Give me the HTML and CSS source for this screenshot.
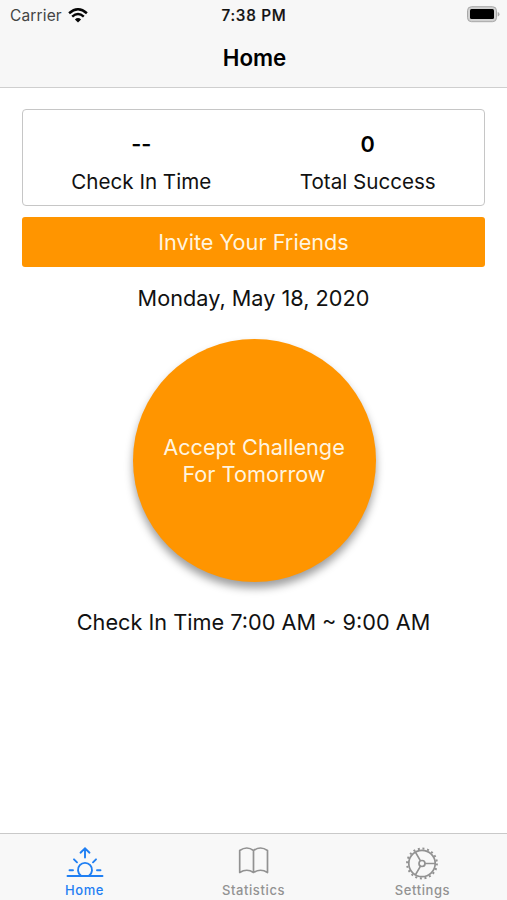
FILE: index.html
```html
<!DOCTYPE html>
<html lang="en">
<head>
<meta charset="utf-8">
<title>Home</title>
<link rel="stylesheet" href="styles.css">
</head>
<body>
<header class="header">
  <div class="status">
    <div class="carrier"><span>Carrier</span>
      <svg class="wifi" width="20" height="15" viewBox="0 0 20 15" fill="none" stroke="#050505" stroke-width="2.5"><path d="M1.1 5.2Q10-2.6 18.9 5.2M4.2 8.6Q10 3.5 15.8 8.6"/><path d="M6.9 11.5Q10 8.7 13.1 11.5L10 14.5Z" fill="#050505" stroke="none"/></svg>
    </div>
    <span class="clock">7:38 PM</span>
    <svg class="battery" width="34" height="17" viewBox="0 0 34 17"><rect x="1.500" y=".7" width="29" height="15" rx="4" fill="#d0d0d0" stroke="#a8a8a8"/><rect x="4" y="3" width="24" height="10" rx="1.500" fill="#000"/><path d="M31.700 6q1.800.6 1.800 2.300t-1.800 2.300z" fill="#aaa"/></svg>
  </div>
  <h1 class="title">Home</h1>
</header>
<main class="content">
  <section class="stats">
    <div class="stat"><strong class="value">--</strong><span class="label">Check In Time</span></div>
    <div class="stat"><strong class="value">0</strong><span class="label">Total Success</span></div>
  </section>
  <button class="invite">Invite Your Friends</button>
  <p class="date">Monday, May 18, 2020</p>
  <button class="challenge"><span>Accept Challenge</span><span>For Tomorrow</span></button>
  <p class="window">Check In Time 7:00 AM ~ 9:00 AM</p>
</main>
<nav class="tabs">
  <a class="tab active">
    <svg width="38" height="34" viewBox="0 0 38 34" fill="none" stroke="currentColor" stroke-width="1.9" stroke-linecap="round"><path d="M19 11.500V2.500M14.500 6.700L19 2.300l4.500 4.400M1.500 30h35M14.800 29.500a7 7 0 1 1 8.400 0M3.500 24.200h3.500M31 24.200h3.500M8 13.300l3 3M30 13.300l-3 3"/></svg>
    <span>Home</span>
  </a>
  <a class="tab">
    <svg width="38" height="34" viewBox="0 0 38 34" fill="none" stroke="currentColor" stroke-width="1.7" stroke-linejoin="round"><path d="M18.500 4.500Q12-.5 4.700 4.500V26.500Q12 22 18.500 26.500Q25.500 22 32.500 26.500V4.500Q25.500-.5 18.500 4.500V26.500"/></svg>
    <span>Statistics</span>
  </a>
  <a class="tab">
    <svg width="38" height="34" viewBox="0 0 38 34" fill="none" stroke="currentColor" stroke-width="1.700"><circle cx="18" cy="17.500" r="13.200"/><circle cx="18" cy="17.500" r="14.900" stroke-width="2" stroke-dasharray="2 2.681"/><circle cx="18" cy="17.500" r="3"/><path d="M21 17.500h10M16.500 14.900l-5.100-8.800M16.500 20.100l-5.100 8.800"/></svg>
    <span>Settings</span>
  </a>
</nav>
</body>
</html>
```
FILE: styles.css
```css
* { box-sizing: border-box; }
body {
  margin: 0;
  height: 900px;
  display: flex;
  flex-direction: column;
  background: #fff;
  color: #111;
  font-family: Inter, "Liberation Sans", sans-serif;
  font-size: 21.7px;
  overflow: hidden;
}
button { border: 0; padding: 0; font: inherit; color: #fff4df; background: #ff9500; }
p { margin: 0; text-align: center; white-space: nowrap; }
.header { height: 88px; background: #f7f7f7; border-bottom: 1px solid #cfcfcf; }
.status {
  height: 30px;
  padding: 0 7px 0 10px;
  display: grid;
  grid-template-columns: 1fr auto 1fr;
  align-items: center;
  font-size: 15.5px;
}
.carrier { display: flex; align-items: center; gap: 6px; color: #444; letter-spacing: .15px; }
.clock { font-size: 15.3px; font-weight: 500; letter-spacing: .7px; margin-left: -2px; -webkit-text-stroke: .2px; }
.battery { justify-self: end; margin-top: -1px; }
.title { margin: 14px 0 0; padding-left: 2px; font-size: 22.3px; line-height: 28px; font-weight: 600; text-align: center; color: #000; }
.content { flex: 1; padding: 21px 22px 0; display: flex; flex-direction: column; align-items: center; }
.stats {
  width: 463px;
  height: 97px;
  padding: 20px 3px 0 5px;
  display: grid;
  grid-template-columns: 1fr 1fr;
  border: 1px solid #c6c6c6;
  border-radius: 4px;
}
.stat { display: flex; flex-direction: column; align-items: center; gap: 10px; line-height: 28px; }
.value { font-weight: 600; color: #000; }
.label { font-size: 20.6px; }
.invite { width: 463px; height: 50px; margin-top: 11px; border-radius: 3px; }
.date { margin-top: 16px; line-height: 30px; }
.challenge {
  width: 243px;
  height: 243px;
  margin-top: 26px;
  margin-left: 1px;
  border-radius: 50%;
  display: flex;
  flex-direction: column;
  align-items: center;
  justify-content: center;
  line-height: 27px;
  box-shadow: 0 6px 9px rgba(0, 0, 0, .38);
}
.window { margin-top: 25px; line-height: 30px; }
.tabs {
  height: 67px;
  display: grid;
  grid-template-columns: repeat(3, 1fr);
  background: #f8f8f8;
  border-top: 1px solid #c9c9c9;
  color: #929292;
}
.tab { display: flex; flex-direction: column; align-items: center; padding-top: 12px; font-size: 13px; line-height: 20px; font-weight: 500; letter-spacing: .6px; }
.active { color: #1f7ff3; }
```
